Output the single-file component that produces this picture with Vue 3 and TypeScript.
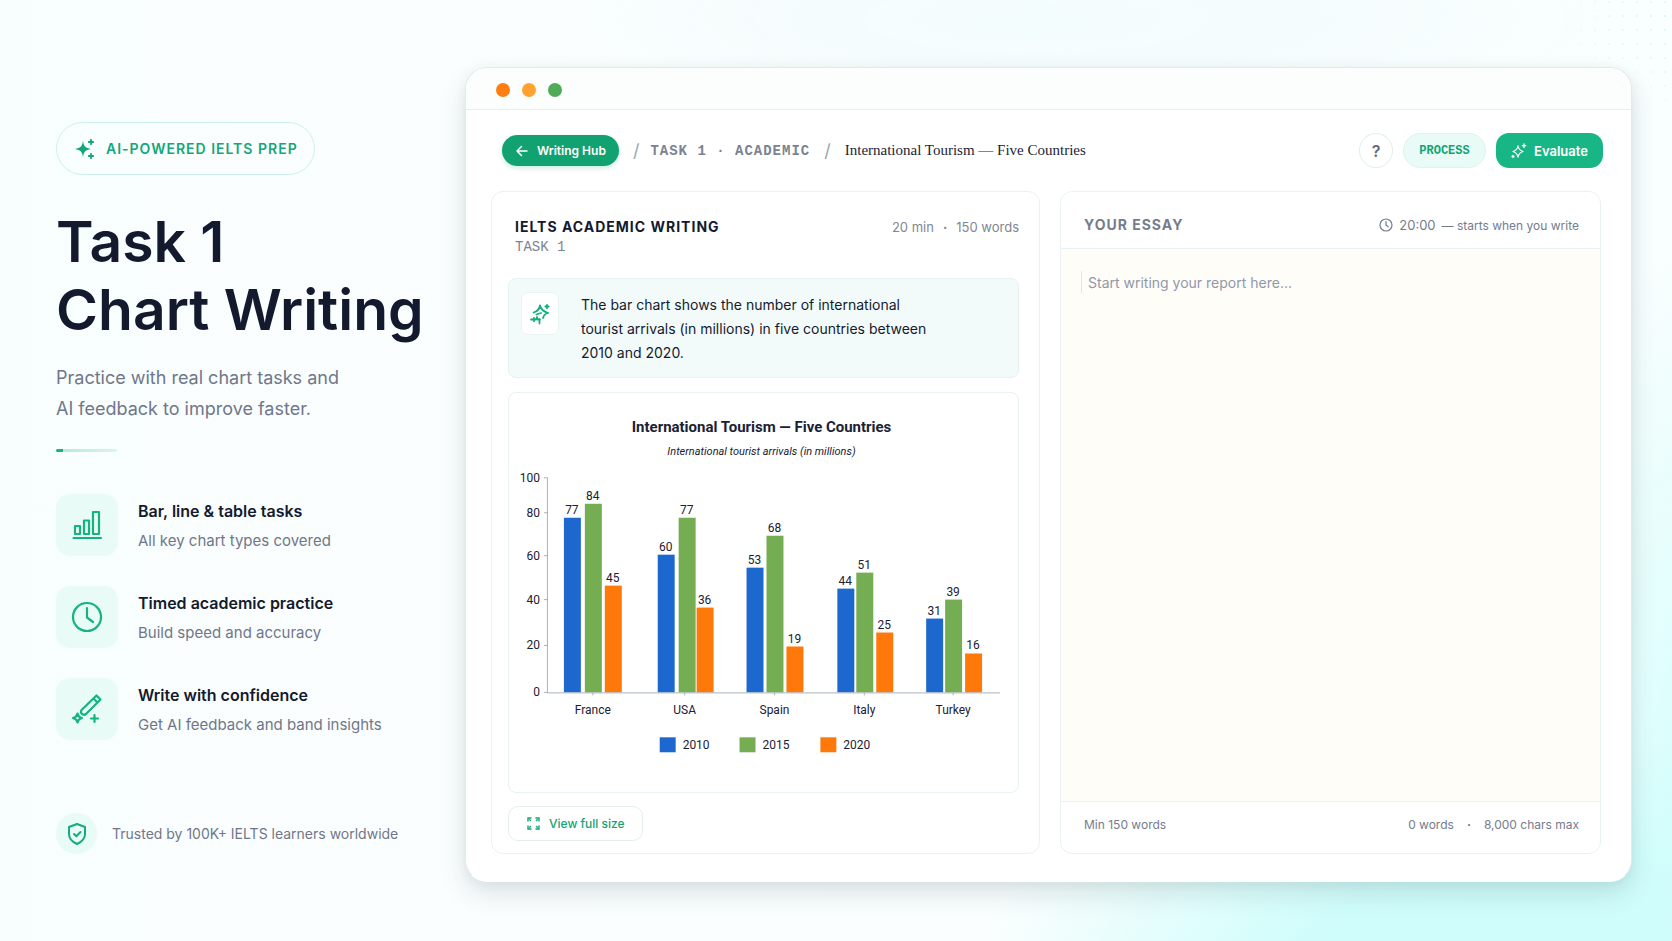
<script setup lang="ts">
interface Bar { x: number; top: number; value: number }
interface Group { name: string; center: number; bars: Bar[] }

const essay = defineModel<string>('essay', { default: '' })

const features = [
  { icon: 'chart', title: 'Bar, line & table tasks', text: 'All key chart types covered' },
  { icon: 'clock', title: 'Timed academic practice', text: 'Build speed and accuracy' },
  { icon: 'pen', title: 'Write with confidence', text: 'Get AI feedback and band insights' },
]

const colors = ['#1d68cf', '#74ad52', '#ff780a']
const baseline = 300

const ticks = [
  { label: 100, y: 85 },
  { label: 80, y: 120 },
  { label: 60, y: 163 },
  { label: 40, y: 207 },
  { label: 20, y: 253 },
  { label: 0, y: 300 },
]

const groups: Group[] = [
  { name: 'France', center: 84, bars: [{ x: 55, top: 125, value: 77 }, { x: 76, top: 111, value: 84 }, { x: 96, top: 193, value: 45 }] },
  { name: 'USA', center: 176, bars: [{ x: 149, top: 162, value: 60 }, { x: 170, top: 125, value: 77 }, { x: 188, top: 215, value: 36 }] },
  { name: 'Spain', center: 266, bars: [{ x: 238, top: 175, value: 53 }, { x: 258, top: 143, value: 68 }, { x: 278, top: 254, value: 19 }] },
  { name: 'Italy', center: 356, bars: [{ x: 329, top: 196, value: 44 }, { x: 348, top: 180, value: 51 }, { x: 368, top: 240, value: 25 }] },
  { name: 'Turkey', center: 445, bars: [{ x: 418, top: 226, value: 31 }, { x: 437, top: 207, value: 39 }, { x: 457, top: 261, value: 16 }] },
]

const legend = [
  { label: '2010', x: 151 },
  { label: '2015', x: 231 },
  { label: '2020', x: 312 },
]
</script>

<template>
  <div class="page">
    <svg class="dots" width="140" height="110" aria-hidden="true">
      <defs>
        <pattern id="dot-grid" width="14" height="14" patternUnits="userSpaceOnUse">
          <circle cx="7" cy="2" r="1" fill="#cdf4ed" />
        </pattern>
        <radialGradient id="dot-fade" cx="1" cy="0.2" r="0.9">
          <stop offset="0" stop-color="#fff" />
          <stop offset="1" stop-color="#000" />
        </radialGradient>
        <mask id="dot-mask"><rect width="140" height="110" fill="url(#dot-fade)" /></mask>
      </defs>
      <rect width="140" height="110" fill="url(#dot-grid)" mask="url(#dot-mask)" />
    </svg>

    <aside class="intro">
      <div class="badge">
        <svg width="20" height="20" viewBox="0 0 20 20" fill="currentColor" aria-hidden="true">
          <path d="M8 2c1 5.500 2.500 7 8 8-5.500 1-7 2.500-8 8-1-5.500-2.500-7-8-8 5.500-1 7-2.500 8-8z" />
          <path d="M16 .8v4.400M13.800 3h4.400M16 14.800v4.400M13.800 17h4.400" stroke="currentColor" stroke-width="1.800" stroke-linecap="round" />
        </svg>
        <span>AI-POWERED IELTS PREP</span>
      </div>

      <h1>Task 1<br />Chart Writing</h1>
      <p class="lead">Practice with real chart tasks and<br />AI feedback to improve faster.</p>
      <div class="rule"></div>

      <ul class="features">
        <li v-for="f in features" :key="f.title">
          <span class="tile">
            <svg v-if="f.icon === 'chart'" width="32" height="32" viewBox="0 0 32 32" fill="none" stroke="currentColor" stroke-width="2.200" stroke-linejoin="round" stroke-linecap="round" aria-hidden="true">
              <path d="M4 17h5v8H4zM13 11.500h5V25h-5zM22 3h6v22h-6zM2.500 29h27.500" />
            </svg>
            <svg v-else-if="f.icon === 'clock'" width="32" height="32" viewBox="0 0 32 32" fill="none" stroke="currentColor" stroke-width="2.200" stroke-linecap="round" stroke-linejoin="round" aria-hidden="true">
              <circle cx="16" cy="16" r="14" />
              <path d="M16 7v9.500l6 4.500" />
            </svg>
            <svg v-else width="32" height="32" viewBox="0 0 32 32" fill="none" stroke="currentColor" stroke-width="2.200" stroke-linecap="round" stroke-linejoin="round" aria-hidden="true">
              <path d="M10.500 17 25.500 2.500l4 4L15 21q-2.200 1.500-4 0t-.5-4zM22.500 5.500l4 4" />
              <path d="M6.500 20.500q.8 3.700 4.500 4.500-3.700.8-4.500 4.500Q5.700 25.800 2 25q3.700-.8 4.500-4.500z" />
              <path d="M23.500 22v7M20 25.500h7" />
            </svg>
          </span>
          <div>
            <h2>{{ f.title }}</h2>
            <p>{{ f.text }}</p>
          </div>
        </li>
      </ul>

      <div class="trust">
        <span class="shield">
          <svg width="22" height="24" viewBox="0 0 22 24" fill="none" stroke="currentColor" stroke-width="2" stroke-linejoin="round" stroke-linecap="round" aria-hidden="true">
            <path d="M11 2 19 5v7c0 5-3.500 8-8 10-4.500-2-8-5-8-10V5z" />
            <path d="m8 12 2.300 2.300L14.500 10" />
          </svg>
        </span>
        <span>Trusted by 100K+ IELTS learners worldwide</span>
      </div>
    </aside>

    <main class="window">
      <div class="titlebar"><i class="red"></i><i class="amber"></i><i class="green"></i></div>

      <div class="content">
        <header class="toolbar">
          <a class="hub" href="#">
            <svg width="12" height="12" viewBox="0 0 12 12" fill="none" stroke="currentColor" stroke-width="1.500" stroke-linecap="round" stroke-linejoin="round" aria-hidden="true"><path d="M11 6H1M5.500 1.500 1 6l4.500 4.500" /></svg>
            Writing Hub
          </a>
          <span class="slash">/</span>
          <span class="crumb">TASK 1 · ACADEMIC</span>
          <span class="slash">/</span>
          <span class="doc">International Tourism — Five Countries</span>
          <div class="actions">
            <button class="help" type="button" aria-label="Help">?</button>
            <button class="process" type="button">PROCESS</button>
            <button class="evaluate" type="button">
              <svg width="16" height="16" viewBox="0 0 16 16" fill="none" stroke="currentColor" stroke-width="1.300" stroke-linecap="round" stroke-linejoin="round" aria-hidden="true">
                <path d="M7 3q.8 4.200 5 5.500-4.200 1.300-5 5.500-.8-4.200-5-5.500Q6.200 7.200 7 3zM13 1v3.400M11.300 2.700h3.400M2 12.500v2M1 13.500h2" />
              </svg>
              Evaluate
            </button>
          </div>
        </header>

        <div class="columns">
          <section class="card task">
            <div class="task-head">
              <div>
                <h3>IELTS ACADEMIC WRITING</h3>
                <p>TASK 1</p>
              </div>
              <span class="meta"><span>20 min</span><b>·</b><span>150 words</span></span>
            </div>

            <div class="prompt">
              <span class="prompt-icon">
                <svg width="22" height="22" viewBox="0 0 22 22" fill="none" stroke="currentColor" stroke-width="1.800" stroke-linecap="round" stroke-linejoin="round" aria-hidden="true">
                  <path d="M11 2.500Q10 8 4.500 9.500M11 2.500q1 5 8 7.500M19 10q-4 1-5 5M7.500 11.500 12 10" />
                  <path d="M2 16.500h5l1-2.500.5 2.500H11M10.500 16v4.500M5 14.800v3.400M18 1.800v3.400M16.300 3.500h3.400" />
                </svg>
              </span>
              <p>The bar chart shows the number of international tourist arrivals (in millions) in five countries between 2010 and 2020.</p>
            </div>

            <div class="chart">
              <svg viewBox="0 0 510 400" role="img" aria-label="International Tourism — Five Countries">
                <text class="chart-title" x="253" y="39" text-anchor="middle">International Tourism — Five Countries</text>
                <text class="chart-sub" x="253" y="62" text-anchor="middle">International tourist arrivals (in millions)</text>
                <g v-for="t in ticks" :key="t.label">
                  <path class="axis" :d="`M35 ${t.y}h4`" />
                  <text x="31" :y="t.y + 4" text-anchor="end">{{ t.label }}</text>
                </g>
                <g v-for="g in groups" :key="g.name">
                  <path class="axis" :d="`M${g.center} 300v3`" />
                  <g v-for="(b, i) in g.bars" :key="b.x">
                    <rect :x="b.x" :y="b.top" width="17" :height="baseline - b.top" :fill="colors[i]" />
                    <text :x="b.x + 8" :y="b.top - 4" text-anchor="middle">{{ b.value }}</text>
                  </g>
                  <text :x="g.center" y="322" text-anchor="middle">{{ g.name }}</text>
                </g>
                <path class="axis" d="M38.500 85v215.500H492" />
                <g v-for="(l, i) in legend" :key="l.label">
                  <rect :x="l.x" y="345" width="16" height="15" :fill="colors[i]" />
                  <text :x="l.x + 23" y="357">{{ l.label }}</text>
                </g>
              </svg>
            </div>

            <button class="full" type="button">
              <svg width="13" height="13" viewBox="0 0 13 13" fill="none" stroke="currentColor" stroke-width="1.400" stroke-linecap="round" aria-hidden="true">
                <path d="M1 4V1h3M9 1h3v3M12 9v3H9M4 12H1V9M9.500 3.500l.8-.8M3.500 3.500l-.8-.8M9.500 9.500l.8.8M3.500 9.500l-.8.8" />
              </svg>
              View full size
            </button>
          </section>

          <section class="card essay">
            <div class="essay-head">
              <h3><label for="essay">YOUR ESSAY</label></h3>
              <span class="timer">
                <svg width="14" height="14" viewBox="0 0 14 14" fill="none" stroke="currentColor" stroke-width="1.200" stroke-linecap="round" aria-hidden="true"><circle cx="7" cy="7" r="6" /><path d="M7 3.500V7l2.200 1.800" /></svg>
                <span class="time">20:00</span>
                <span class="starts">— starts when you write</span>
              </span>
            </div>
            <div class="editor">
              <textarea id="essay" v-model="essay" placeholder="Start writing your report here..."></textarea>
            </div>
            <div class="essay-foot">
              <span>Min 150 words</span>
              <span class="counts"><span>0 words</span><b>·</b><span>8,000 chars max</span></span>
            </div>
          </section>
        </div>
      </div>
    </main>
  </div>
</template>

<style>
body {
  margin: 0;
}
</style>

<style scoped>
* {
  box-sizing: border-box;
}

h1,
h2,
h3,
p,
ul {
  margin: 0;
  padding: 0;
}

button,
textarea {
  font-family: inherit;
}

.page {
  position: relative;
  display: grid;
  grid-template-columns: minmax(380px, 409fr) minmax(0, 1167fr);
  min-height: 100vh;
  padding: 67px 40px 59px 56px;
  font-family: Inter, "Liberation Sans", sans-serif;
  color: #131a2e;
  background:
    radial-gradient(ellipse 560px 260px at 92% 104%, #cdfdfb 0%, #d0fdfb 45%, rgba(214, 254, 252, 0) 100%),
    radial-gradient(ellipse 180px 560px at 102% 85%, #d3fefc 0%, rgba(214, 254, 252, 0) 100%),
    radial-gradient(ellipse 600px 120px at 62% 2%, rgba(240, 251, 252, 0.7) 0%, rgba(240, 251, 252, 0) 100%),
    linear-gradient(90deg, #f8fdfd 0%, #fbfefe 30%, #f9fefe 100%);
}

.dots {
  position: absolute;
  top: 0;
  right: 0;
}

.intro {
  padding-top: 55px;
}

.badge {
  display: inline-flex;
  align-items: center;
  gap: 11px;
  height: 53px;
  padding: 0 16px 0 18px;
  border: 1px solid #cdf1e8;
  border-radius: 27px;
  color: #15a67a;
  font-size: 14px;
  font-weight: 600;
  letter-spacing: 1px;
}

h1 {
  margin-top: 33px;
  font-size: 57px;
  font-weight: 600;
  line-height: 68px;
}

.lead {
  margin-top: 18px;
  color: #70778a;
  font-size: 18px;
  line-height: 31px;
}

.rule {
  width: 61px;
  height: 3px;
  margin-top: 25px;
  border-radius: 2px;
  background: linear-gradient(90deg, #1db184 0 7px, #b5ebdc 7px, #d9f5ef);
}

.features {
  display: flex;
  flex-direction: column;
  gap: 30px;
  margin-top: 42px;
  list-style: none;
}

.features li {
  display: flex;
  align-items: center;
  gap: 20px;
}

.features li > div {
  padding-top: 2px;
}

.tile {
  display: grid;
  flex: none;
  place-items: center;
  width: 62px;
  height: 62px;
  border-radius: 14px;
  color: #14b37f;
  background: #e9fbf7;
}

h2 {
  font-size: 16px;
  font-weight: 600;
  line-height: 29px;
}

.features p {
  color: #70778a;
  font-size: 15px;
  line-height: 29px;
}

.trust {
  display: flex;
  align-items: center;
  gap: 15px;
  margin-top: 73px;
  color: #70778a;
  font-size: 14px;
}

.shield {
  display: grid;
  place-items: center;
  width: 41px;
  height: 41px;
  border-radius: 50%;
  color: #14ac7b;
  background: #e9fbf7;
}

.window {
  display: flex;
  flex-direction: column;
  overflow: hidden;
  border: 1px solid #e2eaec;
  border-bottom-color: #fff;
  border-radius: 22px;
  background: #fff;
  box-shadow: 0 12px 26px rgba(40, 70, 80, 0.14), 0 2px 12px rgba(40, 70, 80, 0.05);
}

.titlebar {
  display: flex;
  align-items: center;
  gap: 12px;
  height: 42px;
  padding: 2px 30px 0;
  border-bottom: 1px solid #e6eeef;
  background: #fcfefe;
}

.titlebar i {
  width: 14px;
  height: 14px;
  border-radius: 50%;
}

.red {
  background: #ff7d12;
}

.amber {
  background: #ffa230;
}

.green {
  background: #50ab58;
}

.content {
  display: flex;
  flex: 1;
  flex-direction: column;
  padding: 23px 28px 27px 25px;
}

.toolbar {
  display: flex;
  align-items: center;
  padding-left: 11px;
}

.hub {
  display: flex;
  align-items: center;
  gap: 9px;
  height: 31px;
  padding: 0 13px 0 14px;
  border-radius: 16px;
  color: #fff;
  background: #12a171;
  box-shadow: 0 2px 5px rgba(18, 161, 113, 0.22);
  font-size: 12px;
  font-weight: 600;
  text-decoration: none;
}

.slash {
  margin: 0 11px 0 14px;
  color: #9aa5b2;
  font-size: 18px;
}

.crumb {
  color: #7b8392;
  font-family: "Liberation Mono", monospace;
  font-size: 14px;
  font-weight: 700;
  letter-spacing: 1px;
}

.doc {
  margin-left: 3px;
  color: #1c2438;
  font-family: "Liberation Serif", serif;
  font-size: 15px;
}

.actions {
  display: flex;
  gap: 10px;
  margin-left: auto;
}

.actions button {
  height: 35px;
  padding: 0;
  border: 0;
}

.actions .help {
  width: 34px;
  border: 1px solid #e2eeee;
  border-radius: 50%;
  color: #626a7b;
  background: #fff;
  font-size: 16px;
  font-weight: 600;
}

.actions .process {
  width: 83px;
  border: 1px solid #d9f5ee;
  border-radius: 18px;
  color: #12a474;
  background: #e9fbf7;
  font-family: "Liberation Mono", monospace;
  font-size: 12px;
  font-weight: 700;
}

.actions .evaluate {
  display: flex;
  align-items: center;
  justify-content: center;
  gap: 7px;
  width: 107px;
  border-radius: 13px;
  color: #fff;
  background: #19b685;
  font-size: 13px;
  font-weight: 600;
}

.columns {
  display: grid;
  flex: 1;
  grid-template-columns: minmax(0, 549fr) minmax(0, 541fr);
  gap: 20px;
  margin: 23px 2px 0 0;
}

.card {
  display: flex;
  flex-direction: column;
  overflow: hidden;
  border: 1px solid #e9f2f2;
  border-radius: 12px;
  background: #fff;
}

.task {
  padding: 24px 20px 12px 16px;
}

.task-head {
  display: flex;
  justify-content: space-between;
  padding-left: 7px;
}

h3 {
  font-size: 14px;
  font-weight: 700;
  letter-spacing: 1px;
  line-height: 22px;
}

.task-head p {
  color: #7b8392;
  font-family: "Liberation Mono", monospace;
  font-size: 14px;
  line-height: 18px;
}

.meta,
.counts {
  display: flex;
  gap: 9px;
}

.meta {
  color: #7f8696;
  font-size: 13px;
  line-height: 22px;
}

.prompt {
  display: flex;
  align-items: flex-start;
  gap: 22px;
  margin-top: 22px;
  padding: 13px 80px 12px 12px;
  border: 1px solid #e6f3f2;
  border-radius: 8px;
  background: #f3fbfa;
}

.prompt-icon {
  display: grid;
  flex: none;
  place-items: center;
  width: 38px;
  height: 43px;
  border: 1px solid #e9f5f3;
  border-radius: 7px;
  color: #14ae7d;
  background: #fff;
}

.prompt p {
  padding-top: 1px;
  font-size: 14px;
  line-height: 24px;
}

.chart {
  margin-top: 14px;
  border: 1px solid #e9f2f2;
  border-radius: 8px;
}

.chart svg {
  display: block;
  width: 100%;
}

.chart text {
  fill: #1a2135;
  font-family: Roboto, "Liberation Sans", sans-serif;
  font-size: 12px;
}

.chart .chart-title {
  font-size: 15px;
  font-weight: 700;
}

.chart .chart-sub {
  font-size: 11px;
  font-style: italic;
}

.axis {
  fill: none;
  stroke: #aab3b8;
  stroke-width: 1;
}

.full {
  display: flex;
  align-items: center;
  align-self: flex-start;
  gap: 9px;
  height: 35px;
  margin-top: 13px;
  padding: 0 17px 0 18px;
  border: 1px solid #e3efee;
  border-radius: 10px;
  color: #12a474;
  background: #fff;
  font-size: 12px;
  font-weight: 500;
}

.essay-head {
  display: flex;
  align-items: center;
  justify-content: space-between;
  height: 57px;
  padding: 10px 21px 0 23px;
  border-bottom: 1px solid #e9f2f2;
  color: #747c8d;
}

.timer {
  display: flex;
  align-items: center;
  gap: 6px;
  font-size: 13px;
}

.starts {
  font-size: 12px;
}

.editor {
  display: flex;
  flex: 1;
  padding: 22px 20px;
  background: #fffdf8;
}

textarea {
  flex: 1;
  padding: 0 0 0 7px;
  border: 0;
  outline: 0;
  resize: none;
  color: #131a2e;
  background: linear-gradient(#d9e7ef, #d9e7ef) 0 0 / 1px 22px no-repeat;
  font-size: 14px;
  line-height: 24px;
}

textarea::placeholder {
  color: #9098a8;
  opacity: 1;
}

.essay-foot {
  display: flex;
  align-items: center;
  justify-content: space-between;
  height: 52px;
  padding: 0 21px 6px 23px;
  border-top: 1px solid #e9f2f2;
  color: #747c8d;
  font-size: 12px;
}

.counts {
  gap: 13px;
}
</style>
